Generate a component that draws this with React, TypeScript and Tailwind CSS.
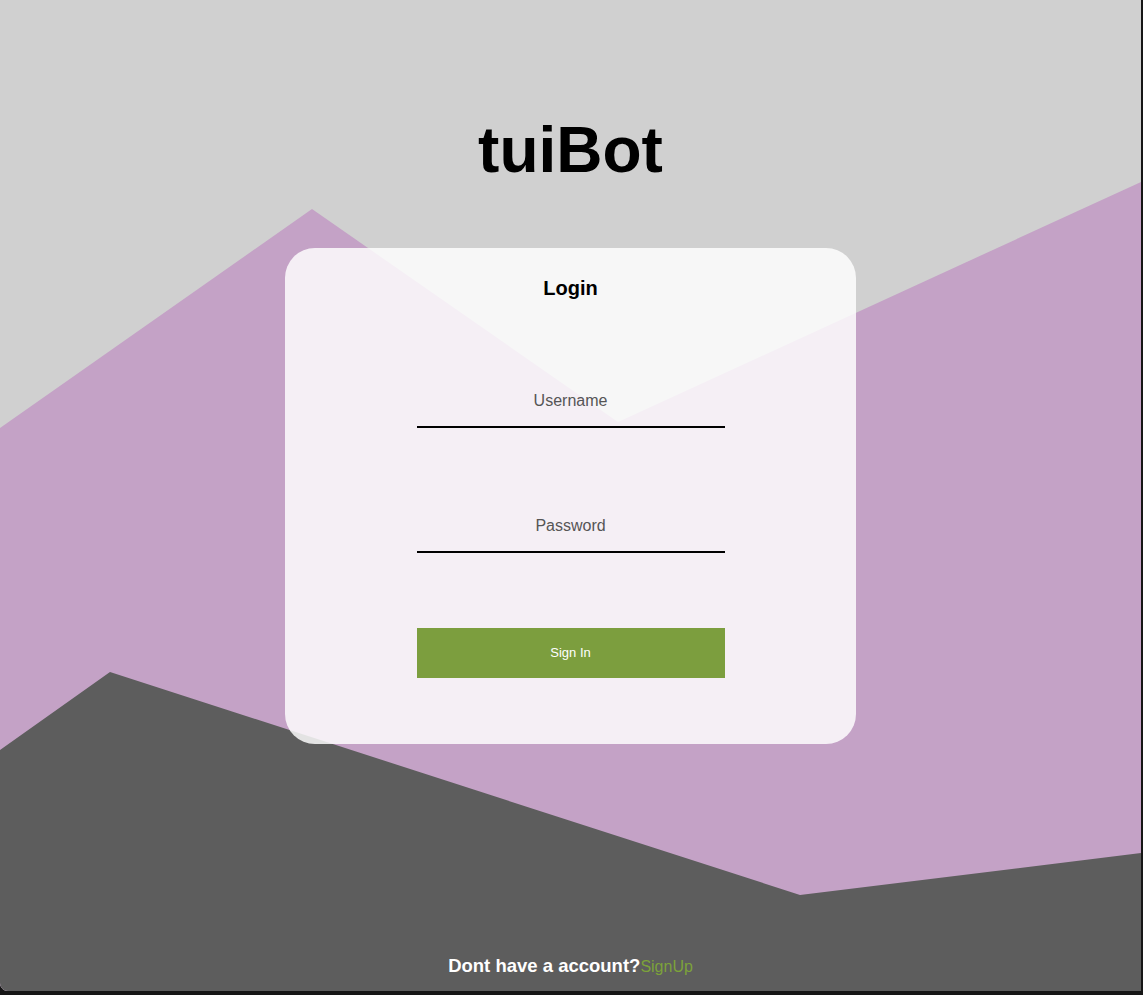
import { useState } from "react";

const font = { fontFamily: '"Liberation Sans", Arial, Helvetica, sans-serif' };

// background shapes behind the card
const Backdrop = () => (
  <svg
    className="absolute inset-0 w-full h-full"
    viewBox="0 0 1141 991"
    preserveAspectRatio="none"
  >
    <polygon points="0,428 312,209 618,422 1141,182 1141,991 0,991" fill="#c4a2c6" />
    <polygon points="0,750 110,672 800,895 1141,853 1141,991 0,991" fill="#5d5d5d" />
  </svg>
);

export default function App() {
  const [username, setUsername] = useState("");
  const [password, setPassword] = useState("");

  return (
    <div className="bg-[#161616] w-full h-[995px]" style={font}>
      <div className="relative w-[1141px] h-[991px] overflow-hidden rounded-bl-lg bg-[#d0d0d0] flex flex-col items-center">
        <Backdrop />

        <h1 className="relative mt-[118px] text-[64px] leading-none font-bold text-black">tuiBot</h1>

        <form
          className="relative mt-[66px] w-[571px] rounded-[30px] bg-white/[0.83] pt-[30px] pb-[66px] flex flex-col items-center"
          onSubmit={(e) => e.preventDefault()}
        >
          <h2 className="text-xl leading-none font-bold text-black">Login</h2>

          <input
            value={username}
            onChange={(e) => setUsername(e.target.value)}
            placeholder="Username"
            className="mt-[82px] w-[308px] h-[48px] pb-1 bg-transparent border-b-2 border-black text-center text-base text-[#555] placeholder:text-[#555] outline-none"
          />
          <input
            type="password"
            value={password}
            onChange={(e) => setPassword(e.target.value)}
            placeholder="Password"
            className="mt-[77px] w-[308px] h-[48px] pb-1 bg-transparent border-b-2 border-black text-center text-base text-[#555] placeholder:text-[#555] outline-none"
          />

          <button
            type="submit"
            className="mt-[75px] w-[308px] h-[50px] bg-[#7c9e3e] text-white text-[13px]"
          >
            Sign In
          </button>
        </form>

        <p className="relative mt-auto pb-[12px] text-[18.5px] leading-none font-bold text-white">
          Dont have a account?
          <a href="#" className="font-normal text-base text-[#7ca23a]">SignUp</a>
        </p>
      </div>
    </div>
  );
}
